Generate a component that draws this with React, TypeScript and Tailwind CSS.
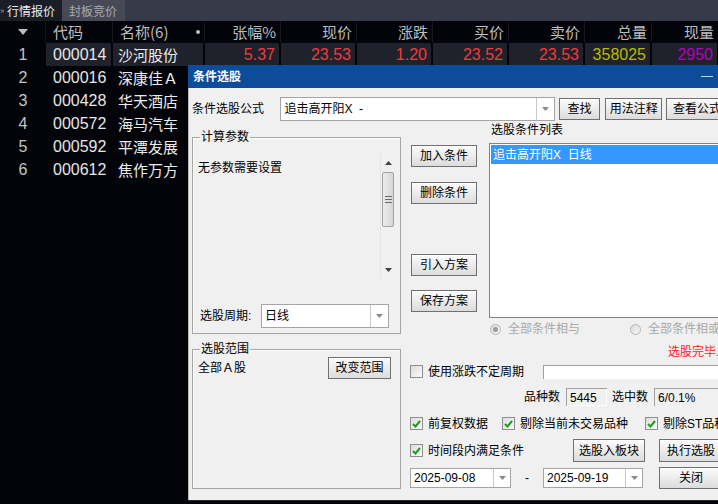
import type { ReactNode } from "react";

const UI = "font-['Liberation_Sans','Noto_Sans_CJK_SC',sans-serif]";

type Quote = {
  n: number;
  code: string;
  name: string;
  vals?: string[];
};

const quotes: Quote[] = [
  { n: 1, code: "000014", name: "沙河股份", vals: ["5.37", "23.53", "1.20", "23.52", "23.53", "358025", "2950"] },
  { n: 2, code: "000016", name: "深康佳Ａ" },
  { n: 3, code: "000428", name: "华天酒店" },
  { n: 4, code: "000572", name: "海马汽车" },
  { n: 5, code: "000592", name: "平潭发展" },
  { n: 6, code: "000612", name: "焦作万方" },
];

const valColors = [
  "text-[#f23a3a]",
  "text-[#f23a3a]",
  "text-[#f23a3a]",
  "text-[#f23a3a]",
  "text-[#f23a3a]",
  "text-[#b8b800]",
  "text-[#b800b8]",
];

const numHeads = ["张幅%", "现价", "涨跌", "买价", "卖价", "总量", "现量"];

const GRID = "grid grid-cols-[46px_67px_92px_76px_76px_76px_76px_76px_67px_67px]";

function DownTri({ color = "#8a8a8a" }: { color?: string }) {
  return (
    <svg width="7" height="4" viewBox="0 0 7 4">
      <polygon points="0,0 7,0 3.5,4" fill={color} />
    </svg>
  );
}

function Btn({ children, className }: { children: ReactNode; className: string }) {
  return (
    <div
      className={`flex items-center justify-center border border-[#707070] bg-linear-to-b from-[#fbfbfb] via-[#ececec] to-[#dcdcdc] text-[12px] leading-none text-black shadow-[inset_0_1px_0_#fff] ${className}`}
    >
      {children}
    </div>
  );
}

function Combo({ value, className, arrowW = "w-[18px]" }: { value: string; className: string; arrowW?: string }) {
  return (
    <div className={`flex border border-[#a5a5a5] bg-white ${className}`}>
      <div className="flex flex-1 items-center pl-[3px] text-[12px] leading-none text-black whitespace-pre">{value}</div>
      <div className={`flex items-center justify-center border-l border-[#c9c9c9] ${arrowW}`}>
        <DownTri />
      </div>
    </div>
  );
}

function Check({ checked }: { checked?: boolean }) {
  return (
    <div className="flex h-[13px] w-[13px] shrink-0 items-center justify-center border border-[#8e8e8e] bg-linear-to-br from-[#dcdcdc] to-[#fbfbfb]">
      {checked && (
        <svg width="9" height="8" viewBox="0 0 9 8">
          <path d="M1 4 L3.5 6.5 L8 1" stroke="#1f9a1f" strokeWidth="2" fill="none" />
        </svg>
      )}
    </div>
  );
}

function CheckItem({ label, checked, className = "" }: { label: string; checked?: boolean; className?: string }) {
  return (
    <div className={`flex items-center ${className}`}>
      <Check checked={checked} />
      <span className="ml-[5px] text-[12px] leading-none text-black whitespace-nowrap">{label}</span>
    </div>
  );
}

function Radio({ checked, label, className = "" }: { checked?: boolean; label: string; className?: string }) {
  return (
    <div className={`flex items-center ${className}`}>
      <div className="flex h-[11px] w-[11px] items-center justify-center rounded-full border border-[#b4b4b4] bg-linear-to-br from-[#d8d8d8] to-[#f8f8f8]">
        {checked && <div className="h-[5px] w-[5px] rounded-full bg-[#9a9a9a]" />}
      </div>
      <span className="ml-[7px] text-[12px] leading-none text-[#a8a8a8] whitespace-nowrap">{label}</span>
    </div>
  );
}

function Group({ title, className, children }: { title: string; className: string; children: ReactNode }) {
  return (
    <div className={`relative border border-[#a5a5a5] shadow-[inset_1px_1px_0_#fff] ${className}`}>
      <span className="absolute -top-[8px] left-[7px] bg-[#f0f0f0] px-[1px] text-[12px] leading-[14px] text-black">{title}</span>
      {children}
    </div>
  );
}

function ScrollBar() {
  return (
    <div className="flex h-[126px] w-[15px] flex-col border-l border-[#e6e6e6] bg-[#f0f0f0]">
      <div className="flex h-[19px] items-center justify-center">
        <svg width="7" height="4" viewBox="0 0 7 4">
          <polygon points="0,4 7,4 3.5,0" fill="#404040" />
        </svg>
      </div>
      <div className="mx-[1px] flex h-[55px] flex-col items-center justify-center gap-[2px] rounded-[2px] border border-[#a3a3a3] bg-linear-to-r from-[#ececec] to-[#d6d6d6]">
        <div className="h-px w-[7px] bg-[#6a6a6a]" />
        <div className="h-px w-[7px] bg-[#6a6a6a]" />
        <div className="h-px w-[7px] bg-[#6a6a6a]" />
      </div>
      <div className="flex-1" />
      <div className="flex h-[19px] items-center justify-center">
        <DownTri color="#404040" />
      </div>
    </div>
  );
}

function QuoteTable() {
  return (
    <div className="font-['Noto_Sans_CJK_SC','Liberation_Sans',sans-serif]">
      <div className="flex h-[21px] bg-[#373a48] text-[12px] leading-[21px]">
        <div className="flex w-[62px] items-center bg-[#1a1c26] text-[#ececec]">
          <span className="w-[7px] text-[9px] text-[#9a9a9a]">»</span>
          <span>行情报价</span>
        </div>
        <div className="w-[63px] bg-[#474a56] pl-[7px] text-[#a9a9a9]">封板竞价</div>
      </div>
      <div className={`${GRID} h-[22px] bg-[#03040a] text-[15px] leading-[22px] text-[#bdbdbd]`}>
        <div className="flex items-center justify-center border-r border-[#16171e]">
          <svg width="10" height="6" viewBox="0 0 10 6">
            <polygon points="0,0 10,0 5,6" fill="#bdbdbd" />
          </svg>
        </div>
        <div className="border-r border-[#16171e] pl-[7px]">代码</div>
        <div className="flex items-center justify-between border-r border-[#16171e] pl-[7px] pr-[4px]">
          <span>名称(6)</span>
          <span className="h-[4px] w-[4px] rounded-full bg-[#bdbdbd]" />
        </div>
        {numHeads.map((h) => (
          <div key={h} className="border-r border-[#16171e] pr-[4px] text-right">
            {h}
          </div>
        ))}
      </div>
      {quotes.map((q) => {
        const hl = q.n === 1;
        const cell = hl ? "bg-[#20222b] border-r-2 border-[#03040a]" : "";
        return (
          <div key={q.code} className={`${GRID} h-[23px] leading-[23px]`}>
            <div className="text-center font-['Liberation_Sans',sans-serif] text-[16px] text-[#c4c4c4]">{q.n}</div>
            <div className={`${cell} pl-[7px] font-['Liberation_Sans',sans-serif] text-[16px] text-[#e6e6e6]`}>{q.code}</div>
            <div className={`${cell} pl-[5px] text-[15px] text-[#ececec]`}>{q.name}</div>
            {numHeads.map((h, i) => (
              <div
                key={h}
                className={`${cell} pr-[4px] text-right font-['Liberation_Sans',sans-serif] text-[16px] ${valColors[i]}`}
              >
                {q.vals ? q.vals[i] : ""}
              </div>
            ))}
          </div>
        );
      })}
    </div>
  );
}

function Dialog() {
  return (
    <div className={`absolute left-[188px] top-[65px] flex h-[436px] w-[540px] flex-col border-b border-[#2a2a2a] ${UI}`}>
      <div className="flex h-[23px] items-center justify-between bg-[#0c4c98] pl-[5px] pr-[15px]">
        <span className="text-[12px] font-bold leading-none text-white">条件选股</span>
        <span className="h-px w-[12px] bg-[#c8d4e4]" />
      </div>
      <div className="flex flex-1 flex-col border-l border-[#b8b8b8] bg-[#f0f0f0] pl-[3px]">
        <div className="mt-[9px] flex h-[24px] items-center">
          <span className="w-[89px] text-[12px] leading-none text-black">条件选股公式</span>
          <Combo value="追击高开阳X  -" className="h-[24px] w-[276px]" />
          <Btn className="ml-[4px] h-[22px] w-[42px]">查找</Btn>
          <Btn className="ml-[5px] h-[22px] w-[57px]">用法注释</Btn>
          <Btn className="ml-[4px] h-[22px] w-[62px] shrink-0">查看公式</Btn>
        </div>
        <div className="flex">
          <div className="flex w-[209px] shrink-0 flex-col">
            <Group title="计算参数" className="mt-[16px] h-[197px]">
              <div className="mt-[15px] flex h-[126px]">
                <div className="flex-1 pl-[5px] pt-[8px] text-[12px] leading-[14px] text-black">无参数需要设置</div>
                <div className="mr-[5px]">
                  <ScrollBar />
                </div>
              </div>
              <div className="mt-[25px] flex h-[24px] items-center pl-[7px]">
                <span className="w-[61px] text-[12px] leading-none text-black">选股周期:</span>
                <Combo value="日线" className="h-[24px] w-[128px]" />
              </div>
            </Group>
            <Group title="选股范围" className="mt-[15px] h-[140px]">
              <div className="mt-[7px] flex h-[22px] items-center pl-[5px] pr-[9px]">
                <span className="text-[12px] leading-none text-black">全部Ａ股</span>
                <Btn className="ml-auto h-[22px] w-[63px]">改变范围</Btn>
              </div>
            </Group>
          </div>
          <div className="ml-[9px] flex w-[340px] shrink-0 flex-col">
            <div className="flex h-[197px]">
              <div className="ml-[1px] flex w-[66px] flex-col pt-[24px]">
                <Btn className="h-[22px] w-[66px]">加入条件</Btn>
                <Btn className="mt-[15px] h-[22px] w-[66px]">删除条件</Btn>
                <Btn className="mt-[50px] h-[22px] w-[66px]">引入方案</Btn>
                <Btn className="mt-[14px] h-[22px] w-[66px]">保存方案</Btn>
              </div>
              <div className="ml-[12px] flex w-[250px] flex-col">
                <div className="h-[22px] pl-[2px] pt-[2px] text-[12px] leading-[14px] text-black">选股条件列表</div>
                <div className="h-[175px] border border-[#828282] bg-white p-px">
                  <div className="flex h-[19px] items-center bg-[#3399ff] pl-[2px] text-[12px] leading-none text-white whitespace-pre">
                    追击高开阳X  日线
                  </div>
                </div>
              </div>
            </div>
            <div className="mt-[5px] flex h-[12px] items-center">
              <Radio checked label="全部条件相与" className="ml-[80px] w-[140px]" />
              <Radio label="全部条件相或" />
            </div>
            <div className="mt-[10px] h-[14px] pl-[258px] text-[12px] leading-[14px] text-[#ff1a1a] whitespace-nowrap">选股完毕.</div>
            <div className="mt-[6px] flex h-[13px] items-center">
              <CheckItem label="使用涨跌不定周期" className="w-[133px]" />
              <div className="h-[14px] w-[200px] border-l border-t border-[#a0a0a0] bg-white" />
            </div>
            <div className="mt-[10px] flex h-[18px] items-center text-[12px] leading-none text-black">
              <span className="ml-[114px] w-[42px]">品种数</span>
              <div className="flex h-[18px] w-[41px] items-center border-l border-t border-[#a0a0a0] pl-[3px] shadow-[inset_-1px_-1px_0_#fff]">5445</div>
              <span className="ml-[5px] w-[42px]">选中数</span>
              <div className="flex h-[18px] w-[80px] items-center border-l border-t border-[#a0a0a0] pl-[3px]">6/0.1%</div>
            </div>
            <div className="mt-[11px] flex h-[13px] items-center">
              <CheckItem checked label="前复权数据" className="w-[92px]" />
              <CheckItem checked label="剔除当前未交易品种" className="w-[143px]" />
              <CheckItem checked label="剔除ST品种" />
            </div>
            <div className="mt-[9px] flex h-[23px] items-center">
              <CheckItem checked label="时间段内满足条件" className="w-[163px]" />
              <Btn className="h-[23px] w-[72px]">选股入板块</Btn>
              <Btn className="ml-[14px] h-[23px] w-[64px]">执行选股</Btn>
            </div>
            <div className="mt-[4px] flex h-[23px] items-center">
              <Combo value="2025-09-08" className="h-[20px] w-[101px]" arrowW="w-[17px]" />
              <span className="w-[32px] text-center text-[12px] leading-none text-black">-</span>
              <Combo value="2025-09-19" className="h-[20px] w-[100px]" arrowW="w-[17px]" />
              <Btn className="ml-[16px] h-[22px] w-[64px]">关闭</Btn>
            </div>
          </div>
        </div>
      </div>
    </div>
  );
}

export default function App() {
  return (
    <div className="relative h-[504px] w-[718px] overflow-hidden bg-[#03040a]">
      <QuoteTable />
      <Dialog />
    </div>
  );
}
